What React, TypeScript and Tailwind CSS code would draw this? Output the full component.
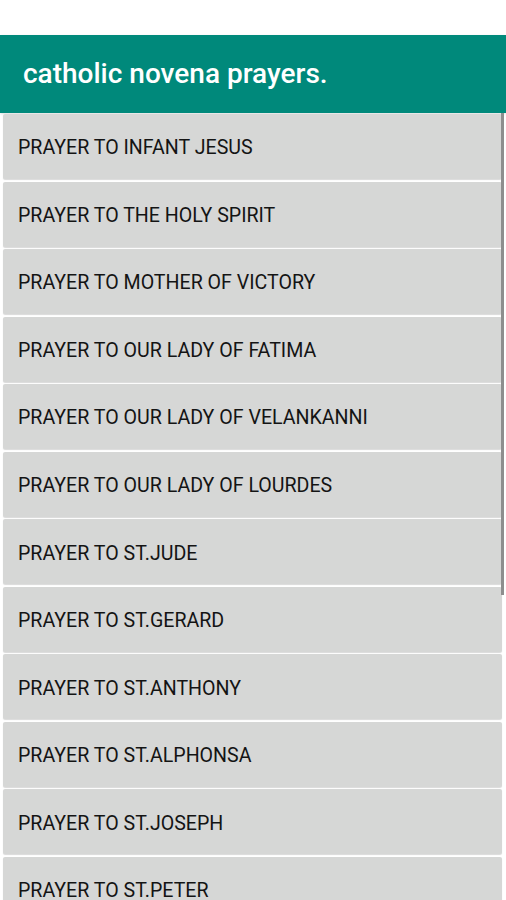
const prayers = [
  "PRAYER TO INFANT JESUS",
  "PRAYER TO THE HOLY SPIRIT",
  "PRAYER TO MOTHER OF VICTORY",
  "PRAYER TO OUR LADY OF FATIMA",
  "PRAYER TO OUR LADY OF VELANKANNI",
  "PRAYER TO OUR LADY OF LOURDES",
  "PRAYER TO ST.JUDE",
  "PRAYER TO ST.GERARD",
  "PRAYER TO ST.ANTHONY",
  "PRAYER TO ST.ALPHONSA",
  "PRAYER TO ST.JOSEPH",
  "PRAYER TO ST.PETER",
  "PRAYER TO ST.MICHAEL",
];

export default function App() {
  return (
    <div className="h-[900px] w-[506px] overflow-hidden bg-white font-['Roboto',sans-serif] flex flex-col">
      {/* Status bar area */}
      <div className="h-[35px] shrink-0 bg-white" />

      {/* Toolbar */}
      <header className="h-[78px] shrink-0 bg-[#00897b] flex items-center px-[23px] shadow-sm">
        <h1 className="text-[28px] font-medium text-white leading-none">
          catholic novena prayers.
        </h1>
      </header>

      {/* List */}
      <div className="relative flex-1 overflow-hidden">
        <div className="flex flex-col gap-[2.55px] pt-[1px] px-[3px] pr-[4px]">
          {prayers.map((p) => (
            <button
              key={p}
              className="h-[65px] shrink-0 rounded-[2px] bg-[#d6d7d6] text-left pl-[15px] pt-[3px] text-[19.6px] text-[#141414] shadow-[0_1px_1px_rgba(0,0,0,0.15)]"
            >
              {p}
            </button>
          ))}
        </div>
        <div className="absolute right-[2px] top-0 h-[482px] w-[3px] bg-[#8e8e8e]" />
      </div>
    </div>
  );
}
